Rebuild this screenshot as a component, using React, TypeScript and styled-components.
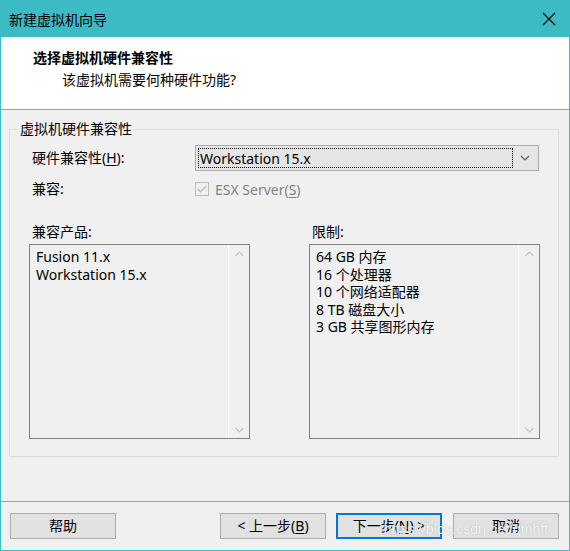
import React from "react";
import styled, { createGlobalStyle } from "styled-components";

const GlobalStyle = createGlobalStyle`
  html, body {
    margin: 0;
    padding: 0;
    background: #ffffff;
  }
  * {
    box-sizing: border-box;
  }
  body {
    font-family: "Noto Sans", "Noto Sans CJK SC", sans-serif;
    font-size: 14px;
    color: #000;
  }
`;

const Window = styled.div`
  position: relative;
  width: 570px;
  height: 551px;
  display: flex;
  flex-direction: column;
  border: 1px solid #3cbbc4;
  border-top: none;
  background: #f0f0f0;
  overflow: hidden;
`;

const TitleBar = styled.div`
  height: 37px;
  display: flex;
  align-items: center;
  justify-content: space-between;
  background: #3cbbc4;
  padding: 0 14px 0 9px;
  margin: 0 -1px;
  font-size: 14px;
  color: #000;
`;

const CloseIcon = styled.svg`
  width: 14px;
  height: 14px;
`;

const Header = styled.div`
  height: 73px;
  background: #fff;
  border-bottom: 1px solid #a0a0a0;
  padding: 10px 0 0 32px;
  display: flex;
  flex-direction: column;
`;

const HeaderTitle = styled.div`
  font-weight: bold;
  font-size: 14px;
  line-height: 22px;
`;

const HeaderSub = styled.div`
  font-size: 14px;
  line-height: 22px;
  padding-left: 29px;
`;

const Body = styled.div`
  flex: 1;
  padding: 19px 10px 0 8px;
`;

const GroupBox = styled.div`
  position: relative;
  height: 328px;
  border: 1px solid #dcdcdc;
  padding: 15px 10px 0 19px;
  display: flex;
  flex-direction: column;
`;

const Legend = styled.span`
  position: absolute;
  top: -11px;
  left: 7px;
  padding: 0 3px;
  background: #f0f0f0;
  line-height: 20px;
`;

const FieldRow = styled.div<{ $height: number; $top?: number }>`
  display: grid;
  grid-template-columns: 166px 344px;
  align-items: center;
  height: ${(p) => p.$height}px;
  margin-top: ${(p) => p.$top ?? 0}px;
`;

const Label = styled.span`
  padding-left: 3px;
  line-height: 20px;
`;

const Combo = styled.div`
  height: 26px;
  border: 1px solid #adadad;
  background: #e5e5e5;
  display: flex;
  align-items: center;
  padding: 2px;
`;

const ComboFocus = styled.div`
  flex: 1;
  height: 100%;
  border: 1px dotted #000;
  display: flex;
  align-items: center;
  padding-left: 1px;
`;

const ComboArrow = styled.div`
  width: 23px;
  display: flex;
  justify-content: center;
  align-items: center;
`;

const CheckWrap = styled.div`
  display: flex;
  align-items: center;
  gap: 6px;
  color: #838383;
`;

const CheckBox = styled.div`
  width: 14px;
  height: 14px;
  border: 1px solid #bcbcbc;
  background: #f0f0f0;
  display: flex;
  align-items: center;
  justify-content: center;
`;

const ListsRow = styled.div`
  display: grid;
  grid-template-columns: 221px 231px;
  column-gap: 59px;
  margin-top: 23px;
`;

const ListColumn = styled.div`
  display: flex;
  flex-direction: column;
  gap: 2px;
`;

const ListBox = styled.div`
  height: 195px;
  border: 1px solid #828282;
  background: #f0f0f0;
  display: flex;
`;

const ListItems = styled.div`
  flex: 1;
  padding: 3px 0 0 6px;
  line-height: 17.6px;
`;

const ScrollTrack = styled.div`
  width: 21px;
  border-left: 1px solid #ffffff;
  display: flex;
  flex-direction: column;
  justify-content: space-between;
  align-items: center;
  padding: 6px 0 5px;
`;

const Footer = styled.div`
  height: 49px;
  border-top: 1px solid #a0a0a0;
  padding: 11px 10px 0 9px;
  display: flex;
  align-items: flex-start;
`;

const Button = styled.div<{ $primary?: boolean; $gap?: number }>`
  width: 106px;
  height: 26px;
  margin-left: ${(p) => p.$gap ?? 0}px;
  border: ${(p) => (p.$primary ? "2px solid #0078d7" : "1px solid #adadad")};
  background: #e1e1e1;
  display: flex;
  align-items: center;
  justify-content: center;
  line-height: 20px;
`;

const Spacer = styled.div`
  flex: 1;
`;

const U = styled.span`
  text-decoration: underline;
  text-underline-offset: 2px;
`;

const Watermark = styled.div`
  position: absolute;
  right: 21px;
  bottom: 13px;
  font-family: "Liberation Sans", Arial, sans-serif;
  font-size: 14px;
  color: rgba(255, 255, 255, 0.85);
  text-shadow: 0 0 1px rgba(120, 120, 120, 0.5);
  pointer-events: none;
`;

const Chevron = ({ up, color, w = 9 }: { up?: boolean; color: string; w?: number }) => (
  <svg width={w} height={6} viewBox="0 0 9 6">
    <path
      d={up ? "M0.5 5 L4.5 1 L8.5 5" : "M0.5 1 L4.5 5 L8.5 1"}
      fill="none"
      stroke={color}
      strokeWidth="1.2"
    />
  </svg>
);

const Scrollbar = () => (
  <ScrollTrack>
    <Chevron up color="#c4c4c4" />
    <Chevron color="#c4c4c4" />
  </ScrollTrack>
);

const products = ["Fusion 11.x", "Workstation 15.x"];
const limits = ["64 GB 内存", "16 个处理器", "10 个网络适配器", "8 TB 磁盘大小", "3 GB 共享图形内存"];

export default function App() {
  return (
    <>
      <GlobalStyle />
      <Window>
        <TitleBar>
          <span>新建虚拟机向导</span>
          <CloseIcon viewBox="0 0 14 14">
            <path d="M1 1 L13 13 M13 1 L1 13" stroke="#000" strokeWidth="1.1" />
          </CloseIcon>
        </TitleBar>
        <Header>
          <HeaderTitle>选择虚拟机硬件兼容性</HeaderTitle>
          <HeaderSub>该虚拟机需要何种硬件功能?</HeaderSub>
        </Header>
        <Body>
          <GroupBox>
            <Legend>虚拟机硬件兼容性</Legend>
            <FieldRow $height={26}>
              <Label>
                硬件兼容性(<U>H</U>):
              </Label>
              <Combo>
                <ComboFocus>Workstation 15.x</ComboFocus>
                <ComboArrow>
                  <Chevron color="#606060" w={10} />
                </ComboArrow>
              </Combo>
            </FieldRow>
            <FieldRow $height={20} $top={8}>
              <Label>兼容:</Label>
              <CheckWrap>
                <CheckBox>
                  <svg width="10" height="8" viewBox="0 0 10 8">
                    <path d="M0.8 4 L3.6 6.8 L9.2 1" fill="none" stroke="#bcbcbc" strokeWidth="1.3" />
                  </svg>
                </CheckBox>
                <span>
                  ESX Server(<U>S</U>)
                </span>
              </CheckWrap>
            </FieldRow>
            <ListsRow>
              <ListColumn>
                <Label>兼容产品:</Label>
                <ListBox>
                  <ListItems>
                    {products.map((p) => (
                      <div key={p}>{p}</div>
                    ))}
                  </ListItems>
                  <Scrollbar />
                </ListBox>
              </ListColumn>
              <ListColumn>
                <Label>限制:</Label>
                <ListBox>
                  <ListItems>
                    {limits.map((l) => (
                      <div key={l}>{l}</div>
                    ))}
                  </ListItems>
                  <Scrollbar />
                </ListBox>
              </ListColumn>
            </ListsRow>
          </GroupBox>
        </Body>
        <Footer>
          <Button>帮助</Button>
          <Spacer />
          <Button>
            &lt; 上一步(<U>B</U>)
          </Button>
          <Button $primary $gap={10}>
            下一步(<U>N</U>) &gt;
          </Button>
          <Button $gap={11}>取消</Button>
        </Footer>
        <Watermark>https://blog.csdn.net/qmhft</Watermark>
      </Window>
    </>
  );
}
